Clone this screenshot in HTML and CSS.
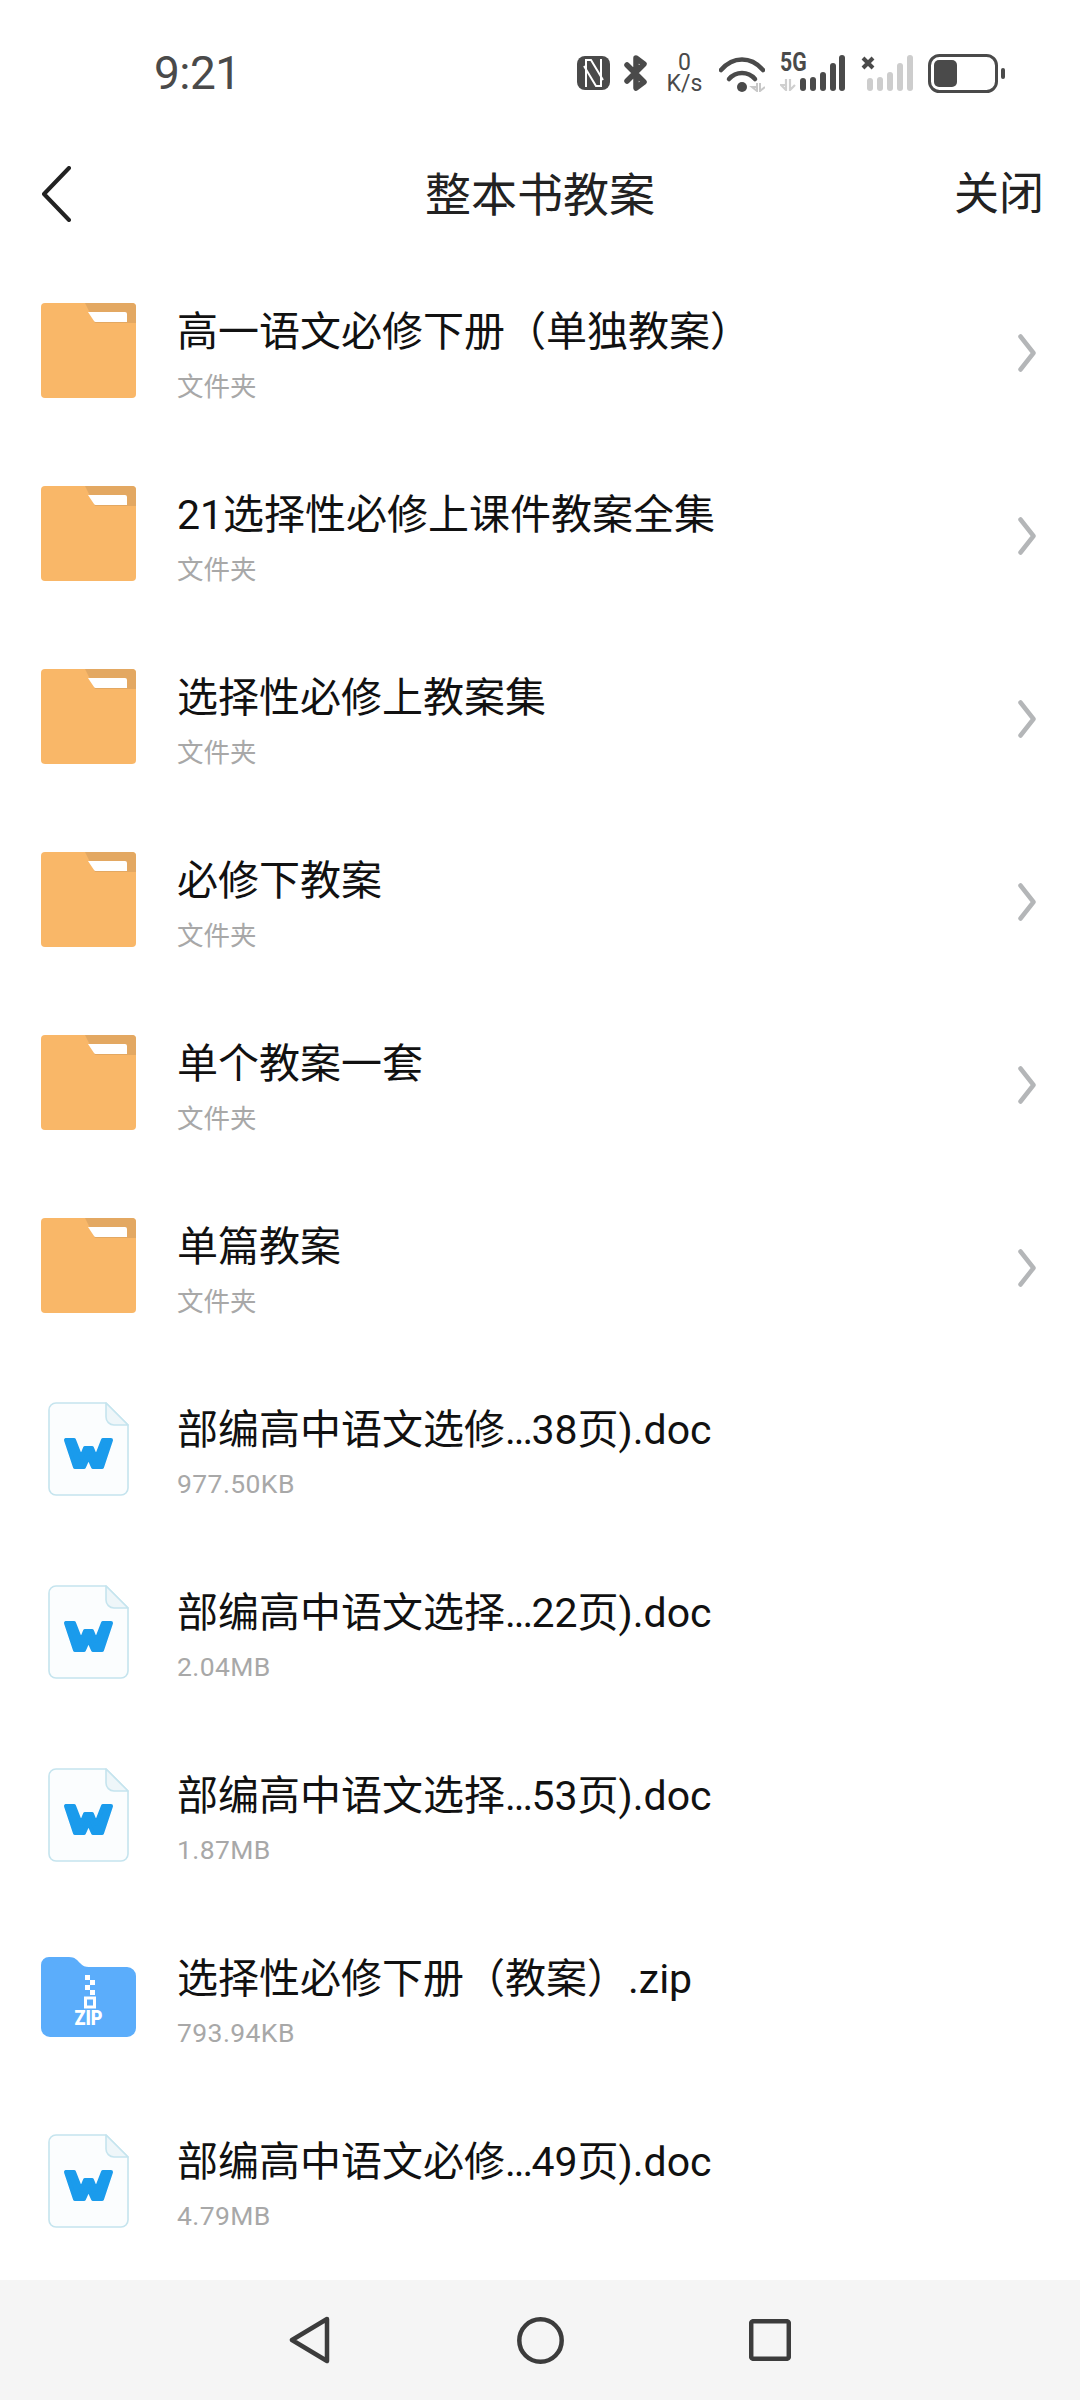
FILE: index.html
```html
<!DOCTYPE html>
<html lang="zh-CN">
<head>
<meta charset="utf-8">
<title>整本书教案</title>
<link rel="stylesheet" href="styles.css">
</head>
<body>
<svg class="defs" width="0" height="0" aria-hidden="true">
  <defs>
    <symbol id="folder" viewBox="0 0 95 95">
      <rect width="95" height="95" rx="4" fill="#f9b768"/>
      <path d="M44 0H91a4 4 0 0 1 4 4V20H54Z" fill="#e3a862"/>
      <path d="M47 9H84a2 2 0 0 1 2 2V19H55a2 2 0 0 1-2-1Z" fill="#fff"/>
    </symbol>
    <symbol id="doc" viewBox="0 0 81 94">
      <path d="M8 1H58L80 23V86a7 7 0 0 1-7 7H8a7 7 0 0 1-7-7V8a7 7 0 0 1 7-7Z" fill="#fbfdfe" stroke="#c5e4ee" stroke-width="1.6"/>
      <path d="M58 1V15a8 8 0 0 0 8 8H80Z" fill="#eef6f9" stroke="#c5e4ee" stroke-width="1.6" stroke-linejoin="round"/>
      <path d="M18 38H26L33 56L37 46H44L48 56L55 38H63L54 65H45L40.500 55L36 65H27Z" fill="#1a9bec" stroke="#1a9bec" stroke-width="4" stroke-linejoin="round"/>
    </symbol>
    <symbol id="chev" viewBox="0 0 18 38">
      <path d="M2.500 2.500L15.500 19L2.500 35.500" fill="none" stroke="#b4b6b8" stroke-width="4.500" stroke-linecap="round" stroke-linejoin="round"/>
    </symbol>
  </defs>
</svg>

<div class="status">
  <span class="time">9:21</span>
  <div class="status-icons">
    <svg class="ic-nfc" viewBox="0 0 33 34"><rect width="33" height="34" rx="8" fill="#4a4a4a"/><path d="M9 31V4H14L26 24M24 3V30H19L7 10" fill="none" stroke="#fff" stroke-width="2"/></svg>
    <svg class="ic-bt" viewBox="0 0 24 36"><path d="M3 10L20 27L12 33V3L20 9L3 26" fill="none" stroke="#4a4a4a" stroke-width="5.500" stroke-linejoin="round" stroke-linecap="round"/></svg>
    <div class="speed">0<br>K/s</div>
    <svg class="ic-wifi" viewBox="0 0 46 37"><path d="M2 15C14 1 32 1 44 15" fill="none" stroke="#4a4a4a" stroke-width="4.500" stroke-linecap="round"/><path d="M10 24C17 16 29 16 36 24" fill="none" stroke="#4a4a4a" stroke-width="4.500" stroke-linecap="round"/><circle cx="23" cy="32" r="5" fill="#4a4a4a"/><path d="M38 28V36L33 32H38M41 28V36L46 32" fill="none" stroke="#c8c8c8" stroke-width="2"/></svg>
    <div class="sig">
      <span class="sig-label">5G</span>
      <svg class="ic-bars" viewBox="0 0 65 36">
        <path d="M6 24V35L1 30H6M10 24V35L15 30" fill="none" stroke="#cfcfcf" stroke-width="2.200"/>
        <g fill="#4a4a4a"><rect x="20" y="23" width="6" height="13" rx="3"/><rect x="30" y="22" width="6" height="14" rx="3"/><rect x="40" y="17" width="6" height="19" rx="3"/><rect x="50" y="8" width="6" height="28" rx="3"/><rect x="59" y="0" width="6" height="36" rx="3"/></g>
      </svg>
    </div>
    <svg class="ic-bars2" viewBox="0 0 53 36">
      <path d="M3 3L13 13M13 3L3 13" stroke="#4a4a4a" stroke-width="4"/>
      <g fill="#cdcdcd"><rect x="7" y="23" width="6" height="13" rx="3"/><rect x="17" y="22" width="6" height="14" rx="3"/><rect x="27" y="17" width="6" height="19" rx="3"/><rect x="37" y="8" width="6" height="28" rx="3"/><rect x="47" y="0" width="6" height="36" rx="3"/></g>
    </svg>
    <svg class="ic-batt" viewBox="0 0 77 39"><rect x="1.500" y="1.500" width="67" height="36" rx="10" fill="none" stroke="#4a4a4a" stroke-width="3"/><rect x="6" y="6" width="23" height="27" rx="5" fill="#4a4a4a"/><rect x="73" y="14" width="4" height="11" rx="2" fill="#4a4a4a"/></svg>
  </div>
</div>

<header class="bar">
  <svg class="back" viewBox="0 0 32 56"><path d="M29 2L4 28L29 54" fill="none" stroke="#222" stroke-width="4" stroke-linecap="round" stroke-linejoin="round"/></svg>
  <h1 class="bar-title">整本书教案</h1>
  <span class="bar-close">关闭</span>
</header>

<main class="list">
  <div class="row"><svg class="ic-folder"><use href="#folder"/></svg><div class="info"><div class="name">高一语文必修下册（单独教案）</div><div class="meta">文件夹</div></div><svg class="chevron"><use href="#chev"/></svg></div>
  <div class="row"><svg class="ic-folder"><use href="#folder"/></svg><div class="info"><div class="name">21选择性必修上课件教案全集</div><div class="meta">文件夹</div></div><svg class="chevron"><use href="#chev"/></svg></div>
  <div class="row"><svg class="ic-folder"><use href="#folder"/></svg><div class="info"><div class="name">选择性必修上教案集</div><div class="meta">文件夹</div></div><svg class="chevron"><use href="#chev"/></svg></div>
  <div class="row"><svg class="ic-folder"><use href="#folder"/></svg><div class="info"><div class="name">必修下教案</div><div class="meta">文件夹</div></div><svg class="chevron"><use href="#chev"/></svg></div>
  <div class="row"><svg class="ic-folder"><use href="#folder"/></svg><div class="info"><div class="name">单个教案一套</div><div class="meta">文件夹</div></div><svg class="chevron"><use href="#chev"/></svg></div>
  <div class="row"><svg class="ic-folder"><use href="#folder"/></svg><div class="info"><div class="name">单篇教案</div><div class="meta">文件夹</div></div><svg class="chevron"><use href="#chev"/></svg></div>
  <div class="row"><svg class="ic-doc"><use href="#doc"/></svg><div class="info"><div class="name">部编高中语文选修<span class="dots">...</span>38页).doc</div><div class="meta size">977.50KB</div></div></div>
  <div class="row"><svg class="ic-doc"><use href="#doc"/></svg><div class="info"><div class="name">部编高中语文选择<span class="dots">...</span>22页).doc</div><div class="meta size">2.04MB</div></div></div>
  <div class="row"><svg class="ic-doc"><use href="#doc"/></svg><div class="info"><div class="name">部编高中语文选择<span class="dots">...</span>53页).doc</div><div class="meta size">1.87MB</div></div></div>
  <div class="row">
    <div class="ic-zip">
      <svg class="zip-shape" viewBox="0 0 95 81"><path d="M8 0H28C34 0 36 3 39 6C42 9 44 10 48 10H86a9 9 0 0 1 9 9V71a9 9 0 0 1-9 9H9a9 9 0 0 1-9-9V8a8 8 0 0 1 8-8Z" fill="#5badfb"/><path d="M44 18h5v5h-5zM49 23h5v5h-5zM44 28h5v5h-5zM49 33h5v5h-5z" fill="#fff"/><rect x="44.500" y="41" width="9" height="9" fill="none" stroke="#fff" stroke-width="3"/></svg>
      <span class="zip-label">ZIP</span>
    </div>
    <div class="info"><div class="name">选择性必修下册（教案）.zip</div><div class="meta size">793.94KB</div></div>
  </div>
  <div class="row"><svg class="ic-doc"><use href="#doc"/></svg><div class="info"><div class="name">部编高中语文必修<span class="dots">...</span>49页).doc</div><div class="meta size">4.79MB</div></div></div>
</main>

<nav class="nav">
  <svg class="nav-back" viewBox="0 0 42 48"><path d="M38 3L3 24L38 45Z" fill="none" stroke="#3c3c3c" stroke-width="4.500" stroke-linejoin="round"/></svg>
  <svg class="nav-home" viewBox="0 0 47 47"><circle cx="23.500" cy="23.500" r="21.200" fill="none" stroke="#3c3c3c" stroke-width="4.500"/></svg>
  <svg class="nav-recent" viewBox="0 0 42 42"><rect x="2.200" y="2.200" width="37.600" height="37.600" rx="2" fill="none" stroke="#3c3c3c" stroke-width="4.500"/></svg>
</nav>
</body>
</html>
```
FILE: styles.css
```css
* { box-sizing: border-box; }
html, body { margin: 0; padding: 0; }
body {
  width: 1080px;
  height: 2400px;
  background: #fff;
  display: flex;
  flex-direction: column;
  overflow: hidden;
  font-family: Roboto, "Noto Sans CJK SC", sans-serif;
  color: #111;
}
.defs { position: absolute; }

.status {
  height: 146px;
  flex: none;
  display: flex;
  align-items: center;
  justify-content: space-between;
  padding: 0 75px 0 154px;
}
.time { font-size: 46px; color: #4a4a4a; letter-spacing: -0.5px; }
.status-icons { display: flex; align-items: center; }
.ic-nfc { width: 33px; height: 34px; margin-right: 14px; }
.ic-bt { width: 24px; height: 36px; margin-right: 18px; }
.speed {
  font-size: 23px;
  line-height: 21px;
  text-align: center;
  color: #4a4a4a;
  margin-right: 16px;
  width: 37px;
  white-space: nowrap;
}
.ic-wifi { width: 46px; height: 37px; margin-right: 15px; }
.sig { position: relative; width: 65px; height: 36px; margin-right: 15px; }
.sig-label {
  position: absolute;
  left: 0;
  top: -5px;
  font-size: 25px;
  line-height: 25px;
  font-weight: 700;
  color: #4a4a4a;
  transform: scaleX(0.85);
  transform-origin: left;
}
.ic-bars { position: absolute; right: 0; top: 0; width: 65px; height: 36px; }
.ic-bars2 { width: 53px; height: 36px; margin-right: 15px; }
.ic-batt { width: 77px; height: 39px; }

.bar {
  height: 96px;
  flex: none;
  display: flex;
  align-items: center;
  justify-content: space-between;
  padding: 0 36px 0 40px;
  position: relative;
}
.back { width: 32px; height: 56px; }
.bar-title {
  position: absolute;
  left: 0;
  right: 0;
  margin: 0;
  padding-bottom: 6px;
  text-align: center;
  font-size: 46px;
  font-weight: 400;
  color: #222;
}
.bar-close { font-size: 45px; color: #222; padding-bottom: 8px; }

.list {
  flex: 1;
  min-height: 0;
  overflow: hidden;
  padding-top: 17px;
}
.row {
  height: 183px;
  display: flex;
  align-items: center;
  padding: 0 44px 0 41px;
}
.ic-folder { width: 95px; height: 95px; flex: none; }
.ic-doc { width: 81px; height: 94px; flex: none; margin: 0 7px; }
.ic-zip { position: relative; width: 95px; height: 81px; flex: none; }
.zip-shape { display: block; width: 95px; height: 81px; }
.zip-label {
  position: absolute;
  left: 0;
  right: 0;
  bottom: 10px;
  text-align: center;
  font-size: 20px;
  line-height: 20px;
  font-weight: 900;
  color: #fff;
  transform: scaleX(0.9);
}
.info { flex: 1; min-width: 0; margin-left: 41px; padding-top: 10.500px; }
.name { font-size: 41px; line-height: 50px; color: #111; white-space: nowrap; }
.dots { letter-spacing: -2px; }
.meta { font-size: 26.500px; line-height: 36px; margin-top: 11.500px; color: #a8a8a8; }
.size { letter-spacing: 0.4px; position: relative; top: -1px; }
.chevron { width: 18px; height: 38px; flex: none; margin-top: 4px; }

.nav {
  height: 120px;
  flex: none;
  background: #f5f5f5;
  display: flex;
  align-items: center;
  justify-content: center;
  gap: 185.500px;
}
.nav-back { width: 42px; height: 48px; }
.nav-home { width: 47px; height: 47px; }
.nav-recent { width: 42px; height: 42px; }
```
